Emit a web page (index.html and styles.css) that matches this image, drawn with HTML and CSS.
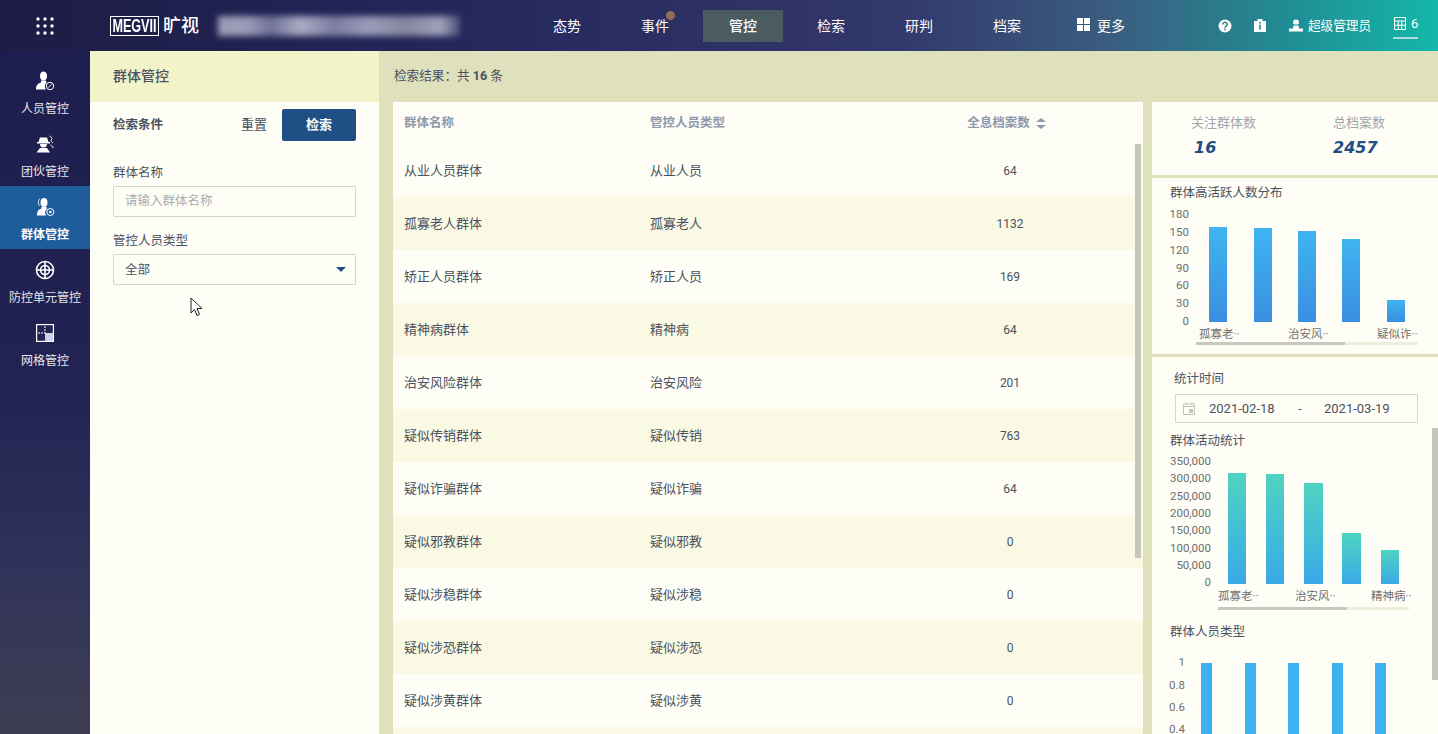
FILE: index.html
```html
<!DOCTYPE html>
<html lang="zh">

<head>
    <meta charset="UTF-8">
    <title>群体管控</title>
    <link rel="stylesheet" href="styles.css">
</head>

<body>
    <header class="topbar">
        <div class="apps">
            <svg width="18" height="18" viewBox="0 0 18 18" fill="#fff">
                <circle cx="2" cy="2" r="1.7" /><circle cx="9" cy="2" r="1.7" /><circle cx="16" cy="2" r="1.7" />
                <circle cx="2" cy="9" r="1.7" /><circle cx="9" cy="9" r="1.7" /><circle cx="16" cy="9" r="1.7" />
                <circle cx="2" cy="16" r="1.7" /><circle cx="9" cy="16" r="1.7" /><circle cx="16" cy="16" r="1.7" />
            </svg>
        </div>
        <div class="logo">
            <span class="logo-box"><span class="logo-en">MEGVII</span></span>
            <span class="logo-cn">旷视</span>
        </div>
        <div class="blurred"></div>
        <nav class="nav">
            <a class="nav-item">态势</a>
            <a class="nav-item">事件<i class="nav-dot"></i></a>
            <a class="nav-item active">管控</a>
            <a class="nav-item">检索</a>
            <a class="nav-item">研判</a>
            <a class="nav-item">档案</a>
            <a class="nav-item nav-more">
                <svg class="more-icon" width="13" height="13" viewBox="0 0 13 13" fill="#fff">
                    <rect width="6" height="6" /><rect x="7" width="6" height="6" />
                    <rect y="7" width="6" height="6" /><rect x="7" y="7" width="6" height="6" />
                </svg>更多
            </a>
        </nav>
        <div class="tools">
            <svg class="tool-help" width="14" height="14" viewBox="0 0 14 14">
                <circle cx="7" cy="7" r="6.5" fill="#fff" />
                <path d="M4.8 5.4a2.2 2.1 0 1 1 3.4 1.8c-.8.5-1.2.9-1.2 1.6" fill="none" stroke="#2a7f8c" stroke-width="1.5" />
                <rect x="6.2" y="9.7" width="1.6" height="1.6" fill="#2a7f8c" />
            </svg>
            <svg class="tool-info" width="12" height="13" viewBox="0 0 12 13">
                <path d="M0 2h3.5V0h5v2H12v11H0z" fill="#fff" />
                <rect x="5.2" y="3" width="1.6" height="1.6" fill="#25868c" />
                <rect x="5.2" y="5.6" width="1.6" height="5" fill="#25868c" />
            </svg>
            <svg class="tool-user" width="14" height="13" viewBox="0 0 14 13" fill="#fff">
                <ellipse cx="7" cy="3" rx="3" ry="2.6" />
                <path d="M4.5 6.5h5l.6 3H14v3H0v-3h3.9z" />
            </svg>
            <span class="tool-name">超级管理员</span>
            <span class="tool-count">
                <svg width="12" height="13" viewBox="0 0 12 13" fill="none" stroke="#fff">
                    <path d="M.5.5h11v12H.5zM.5 4h11M.5 8.200h11M4.200 4v8.500M7.800 4v8.500" />
                </svg>
                <b>6</b>
            </span>
        </div>
    </header>

    <div class="layout">
        <aside class="sidebar">
            <a class="side-item">
                <svg width="20" height="20" viewBox="0 0 20 20" fill="#fff">
                    <ellipse cx="8.5" cy="5" rx="3.6" ry="4.6" />
                    <path d="M6 9.5h5l.5 2.6a5 5 0 0 0-.6 6.4H1c0-4 1.5-6 5-7z" />
                    <circle cx="15" cy="15" r="3.7" fill="none" stroke="#fff" />
                    <path d="M13.2 16.6l3.4-3.4" stroke="#fff" fill="none" />
                </svg>
                <span>人员管控</span>
            </a>
            <a class="side-item">
                <svg width="20" height="20" viewBox="0 0 20 20" fill="#fff">
                    <path d="M2 8h13v1.400H2zM5 3.500h7L13.500 8h-10z" />
                    <path d="M5 10h7a3.500 3.500 0 0 1-7 0z" />
                    <path d="M5 14h7l3 4.500H1.500z" />
                    <path d="M14.500 2c2 1 3 2 2 3.500s0 2.500 1.500 3.500M15.500 11c1.500.5 2.500 1.500 2.500 3" fill="none" stroke="#fff" />
                </svg>
                <span>团伙管控</span>
            </a>
            <a class="side-item active">
                <svg width="20" height="20" viewBox="0 0 20 20" fill="#fff">
                    <ellipse cx="9" cy="5.500" rx="3.500" ry="4.500" />
                    <path d="M6.500 10h5l.4 2a5 5 0 0 0-.8 6.500H2c0-4 1.200-6 4.500-7z" />
                    <path d="M5 1.500A6 6 0 0 0 4.500 9" fill="none" stroke="#fff" stroke-width=".8" />
                    <circle cx="15.300" cy="15" r="3.500" fill="none" stroke="#fff" />
                    <circle cx="15.300" cy="15" r="1.300" />
                </svg>
                <span>群体管控</span>
            </a>
            <a class="side-item">
                <svg width="20" height="20" viewBox="0 0 20 20" fill="none" stroke="#fff" stroke-width="1.600">
                    <circle cx="10" cy="10" r="8.500" />
                    <circle cx="10" cy="10" r="4.500" />
                    <path d="M10 1.500v17M1.500 10h17" />
                </svg>
                <span>防控单元管控</span>
            </a>
            <a class="side-item">
                <svg width="18" height="18" viewBox="0 0 18 18">
                    <rect x=".6" y=".6" width="16.800" height="16.800" fill="none" stroke="#fff" stroke-width="1.200" />
                    <rect x="9" y="9" width="8" height="8" fill="#c9d3ea" />
                    <path d="M2 9h7M9 2v7" stroke="#fff" stroke-dasharray="2 1" />
                </svg>
                <span>网格管控</span>
            </a>
        </aside>

        <section class="filter">
            <h2 class="filter-title">群体管控</h2>
            <div class="filter-body">
                <div class="filter-head">
                    <strong>检索条件</strong>
                    <span class="reset">重置</span>
                    <button class="search-btn">检索</button>
                </div>
                <label class="field-label first">群体名称</label>
                <input class="field" placeholder="请输入群体名称">
                <label class="field-label second">管控人员类型</label>
                <div class="field select">全部<i class="caret"></i></div>
            </div>
        </section>

        <main class="main">
            <div class="result-bar">检索结果：共 <b>16</b> 条</div>
            <div class="main-row">
                <div class="table-wrap">
                    <table class="groups">
                        <colgroup>
                            <col class="col-name">
                            <col class="col-type">
                            <col class="col-count">
                        </colgroup>
                        <thead>
                            <tr>
                                <th>群体名称</th>
                                <th>管控人员类型</th>
                                <th class="num">全息档案数<i class="sort"></i></th>
                            </tr>
                        </thead>
                        <tbody>
                            <tr><td>从业人员群体</td><td>从业人员</td><td class="num">64</td></tr>
                            <tr><td>孤寡老人群体</td><td>孤寡老人</td><td class="num">1132</td></tr>
                            <tr><td>矫正人员群体</td><td>矫正人员</td><td class="num">169</td></tr>
                            <tr><td>精神病群体</td><td>精神病</td><td class="num">64</td></tr>
                            <tr><td>治安风险群体</td><td>治安风险</td><td class="num">201</td></tr>
                            <tr><td>疑似传销群体</td><td>疑似传销</td><td class="num">763</td></tr>
                            <tr><td>疑似诈骗群体</td><td>疑似诈骗</td><td class="num">64</td></tr>
                            <tr><td>疑似邪教群体</td><td>疑似邪教</td><td class="num">0</td></tr>
                            <tr><td>疑似涉稳群体</td><td>疑似涉稳</td><td class="num">0</td></tr>
                            <tr><td>疑似涉恐群体</td><td>疑似涉恐</td><td class="num">0</td></tr>
                            <tr><td>疑似涉黄群体</td><td>疑似涉黄</td><td class="num">0</td></tr>
                            <tr><td></td><td></td><td></td></tr>
                        </tbody>
                    </table>
                    <div class="table-scroll"></div>
                </div>

                <aside class="stats">
                    <div class="card totals">
                        <div class="total total-a">
                            <span>关注群体数</span>
                            <b>16</b>
                        </div>
                        <div class="total total-b">
                            <span>总档案数</span>
                            <b>2457</b>
                        </div>
                    </div>

                    <div class="card chart-card">
                        <h3 class="chart-title">群体高活跃人数分布</h3>
                        <svg class="chart" width="286" height="150" viewBox="1152 204 286 150">
                            <defs>
                                <linearGradient id="blue" x1="0" y1="0" x2="0" y2="1">
                                    <stop offset="0" stop-color="#3fb4f2" />
                                    <stop offset="1" stop-color="#3a8fe0" />
                                </linearGradient>
                                <linearGradient id="teal" x1="0" y1="0" x2="0" y2="1">
                                    <stop offset="0" stop-color="#4fd4c0" />
                                    <stop offset="1" stop-color="#3aa9e8" />
                                </linearGradient>
                            </defs>
                            <g class="axis" text-anchor="end">
                                <text x="1189" y="218">180</text>
                                <text x="1189" y="236">150</text>
                                <text x="1189" y="254">120</text>
                                <text x="1189" y="272">90</text>
                                <text x="1189" y="289">60</text>
                                <text x="1189" y="307">30</text>
                                <text x="1189" y="325">0</text>
                            </g>
                            <g fill="url(#blue)">
                                <rect x="1209" y="227" width="18" height="95" />
                                <rect x="1254" y="228" width="18" height="94" />
                                <rect x="1298" y="231" width="18" height="91" />
                                <rect x="1342" y="239" width="18" height="83" />
                                <rect x="1387" y="300" width="18" height="22" />
                            </g>
                            <g class="axis">
                                <text x="1199" y="338">孤寡老··</text>
                                <text x="1288" y="338">治安风··</text>
                                <text x="1377" y="338">疑似诈··</text>
                            </g>
                            <rect x="1196" y="342" width="222" height="3" fill="#eeeedd" />
                            <rect x="1196" y="342" width="149" height="3" fill="#c8c8c0" />
                        </svg>
                    </div>

                    <div class="card activity">
                        <div class="time-label">统计时间</div>
                        <div class="date-range">
                            <svg class="date-icon" width="12" height="13" viewBox="0 0 12 13" fill="none" stroke="#c5c5b0">
                                <path d="M.5 2h11v10.500H.5zM.5 4.500h11M3 .5V3M9 .5V3" />
                                <rect x="6.500" y="7.500" width="3" height="3" fill="#c5c5b0" />
                            </svg>
                            <span class="date date-from">2021-02-18</span>
                            <span class="date-sep">-</span>
                            <span class="date">2021-03-19</span>
                        </div>
                        <h3 class="chart-title sub">群体活动统计</h3>
                        <svg class="chart" width="286" height="165" viewBox="1152 451 286 165">
                            <g class="axis" text-anchor="end">
                                <text x="1211" y="464">350,000</text>
                                <text x="1211" y="481">300,000</text>
                                <text x="1211" y="499">250,000</text>
                                <text x="1211" y="516">200,000</text>
                                <text x="1211" y="533">150,000</text>
                                <text x="1211" y="551">100,000</text>
                                <text x="1211" y="568">50,000</text>
                                <text x="1211" y="585">0</text>
                            </g>
                            <g fill="url(#teal)">
                                <rect x="1228" y="472" width="18" height="111" />
                                <rect x="1266" y="473" width="18" height="110" />
                                <rect x="1304" y="482" width="19" height="101" />
                                <rect x="1342" y="532" width="19" height="51" />
                                <rect x="1381" y="549" width="18" height="34" />
                            </g>
                            <g class="axis">
                                <text x="1218" y="599">孤寡老··</text>
                                <text x="1295" y="599">治安风··</text>
                                <text x="1371" y="599">精神病··</text>
                            </g>
                            <rect x="1218" y="606" width="191" height="3" fill="#eeeedd" />
                            <rect x="1218" y="606" width="129" height="3" fill="#c8c8c0" />
                        </svg>
                        <h3 class="chart-title sub last">群体人员类型</h3>
                        <svg class="chart" width="286" height="110" viewBox="1152 642 286 110">
                            <g class="axis" text-anchor="end">
                                <text x="1185" y="664">1</text>
                                <text x="1185" y="687">0.8</text>
                                <text x="1185" y="709">0.6</text>
                                <text x="1185" y="731">0.4</text>
                            </g>
                            <g fill="#3fb0f0">
                                <rect x="1201" y="661" width="11" height="90" />
                                <rect x="1245" y="661" width="11" height="90" />
                                <rect x="1288" y="661" width="11" height="90" />
                                <rect x="1332" y="661" width="11" height="90" />
                                <rect x="1375" y="661" width="11" height="90" />
                            </g>
                        </svg>
                        <div class="stats-scroll"></div>
                    </div>
                </aside>
            </div>
        </main>
    </div>

    <svg class="cursor" width="14" height="20" viewBox="0 0 14 20">
        <path d="M1 1v15l3.500-3.500 2.500 6 2.500-1-2.500-6H12z" fill="#fff" stroke="#222" />
    </svg>
</body>

</html>
```

FILE: styles.css
```css
* {
    margin: 0;
    padding: 0;
    box-sizing: border-box;
}

html,
body {
    height: 100%;
    overflow: hidden;
}

body {
    font-family: Roboto, "Noto Sans CJK SC", sans-serif;
    font-size: 13px;
    color: #4a5160;
    background-color: #dfe0bc;
}

/* top bar */
.topbar {
    display: flex;
    align-items: center;
    height: 51px;
    background: linear-gradient(90deg, #1c1c44 0%, #24265a 30%, #32376c 62%, #3a5f80 78%, #1f8f95 90%, #14b8a8 100%);
    color: #fff;
}

.apps {
    display: flex;
    justify-content: center;
    width: 90px;
}

.logo {
    display: flex;
    align-items: center;
    margin-left: 20px;
    width: 108px;
}

.logo-box {
    display: block;
    width: 49px;
    height: 20px;
    border: 1px solid #fff;
    overflow: hidden;
}

.logo-en {
    display: block;
    font-family: "Liberation Sans", sans-serif;
    font-weight: bold;
    font-size: 18px;
    line-height: 18px;
    padding-left: 2px;
    transform: scaleX(0.7);
    transform-origin: left;
}

.logo-cn {
    margin-left: 4px;
    font-size: 18px;
    line-height: 20px;
    font-weight: 500;
}

.blurred {
    width: 242px;
    height: 20px;
    background:
        linear-gradient(90deg, #9b9cb8 0 12%, #70729a 22%, #a9aac2 34%, #7c7ea2 48%, #9a9bb8 62%, #85879f 78%, #a0a1ba 92%, #4b4d78 100%);
    filter: blur(3px);
}

.nav {
    display: flex;
    gap: 8px;
    margin-left: 67px;
}

.nav-item {
    position: relative;
    display: flex;
    align-items: center;
    justify-content: center;
    width: 80px;
    height: 32px;
    padding-bottom: 2px;
    font-size: 14px;
}

.nav-item.active {
    background-color: #4a5c60;
    font-weight: 500;
}

.nav-more {
    padding-left: 12px;
}

.nav-dot {
    position: absolute;
    top: 1px;
    left: 51px;
    width: 9px;
    height: 9px;
    border-radius: 50%;
    background-color: #8f6f55;
}

.more-icon {
    margin-right: 7px;
}

.tools {
    display: flex;
    align-items: center;
    margin-left: 83px;
}

.tool-info {
    margin-left: 22px;
}

.tool-user {
    margin-left: 23px;
}

.tool-name {
    margin-left: 5px;
    padding-bottom: 2px;
    font-size: 12.6px;
}

.tool-count {
    display: flex;
    align-items: center;
    gap: 5px;
    height: 27px;
    margin-left: 22px;
    padding: 0 0 2px 1px;
    border-bottom: 2px solid #a9dcd8;
    font-size: 13px;
}

.tool-count b {
    font-weight: 400;
}

/* page body */
.layout {
    display: flex;
    height: 683px;
}

.sidebar {
    width: 90px;
    padding-top: 9px;
    background: linear-gradient(180deg, #1e1e4e 0%, #222352 50%, #33345a 78%, #3d3d52 100%);
}

.side-item {
    display: flex;
    flex-direction: column;
    align-items: center;
    height: 63px;
    padding-top: 11px;
    color: #e4e6ee;
    font-size: 12px;
}

.side-item svg {
    height: 20px;
    flex: none;
}

.side-item span {
    margin-top: 9px;
    line-height: 18px;
}

.side-item.active {
    background-color: #1e5c9c;
    color: #fff;
    font-weight: 700;
}

.filter {
    width: 289px;
    background-color: #fefef6;
}

.filter-title {
    height: 51px;
    padding-left: 23px;
    font-size: 14px;
    font-weight: 500;
    line-height: 51px;
    background-color: #f3f3ca;
}

.filter-body {
    padding: 7px 23px 0;
}

.filter-head {
    display: flex;
    align-items: center;
    height: 32px;
}

.filter-head strong {
    flex: 1;
    padding-bottom: 3px;
    font-size: 12.5px;
}

.reset {
    margin-right: 15px;
    padding-bottom: 3px;
}

.search-btn {
    width: 74px;
    height: 32px;
    padding-bottom: 3px;
    border: none;
    border-radius: 2px;
    background-color: #1f4f85;
    color: #fff;
    font-family: inherit;
    font-size: 13px;
    font-weight: 700;
}

.field-label {
    display: block;
    font-size: 12.5px;
    line-height: 18px;
}

.field-label.first {
    margin-top: 23px;
}

.field-label.second {
    margin-top: 15px;
}

.field {
    display: block;
    width: 243px;
    height: 31px;
    margin-top: 4px;
    padding: 0 11px 2px;
    border: 1px solid #d6d6c4;
    border-radius: 1px;
    background: transparent;
    font-family: inherit;
    font-size: 12.5px;
    color: #4a5160;
    outline: none;
}

.field::placeholder {
    color: #a8adb5;
}

.select {
    position: relative;
    margin-top: 4px;
    line-height: 29px;
}

.caret {
    position: absolute;
    top: 12px;
    right: 9px;
    border-style: solid;
    border-width: 5px 5px 0;
    border-color: #1f4f85 transparent transparent;
}

.main {
    flex: 1;
    min-width: 0;
}

.result-bar {
    height: 51px;
    padding-left: 15px;
    font-size: 12.6px;
    line-height: 49px;
}

.main-row {
    display: flex;
    padding-left: 14px;
    gap: 9px;
}

.table-wrap {
    position: relative;
    width: 750px;
    height: 632px;
    overflow: hidden;
    background-color: #fefef6;
}

.groups {
    width: 750px;
    table-layout: fixed;
    border-collapse: collapse;
}

.col-name {
    width: 246px;
}

.col-type {
    width: 238px;
}

.col-count {
    width: 266px;
}

.groups th {
    height: 42px;
    padding: 0 11px 3px;
    font-size: 12.5px;
    font-weight: 700;
    text-align: left;
    color: #8e99ad;
}

.groups td {
    height: 53px;
    padding: 0 11px 2px;
}

.groups tbody tr:nth-child(even) {
    background-color: #fafae4;
}

.groups .num {
    text-align: center;
}

.groups td.num {
    padding-bottom: 0;
    font-size: 12px;
}

.groups th.num {
    padding-right: 18px;
}

.sort {
    display: inline-block;
    position: relative;
    width: 10px;
    height: 11px;
    margin-left: 6px;
    vertical-align: -2px;
}

.sort::before,
.sort::after {
    content: "";
    position: absolute;
    left: 0;
    border-left: 5px solid transparent;
    border-right: 5px solid transparent;
}

.sort::before {
    top: 0;
    border-bottom: 4.5px solid #8e99ad;
}

.sort::after {
    bottom: 0;
    border-top: 4.5px solid #8e99ad;
}

.table-scroll {
    position: absolute;
    top: 42px;
    right: 2px;
    width: 6px;
    height: 414px;
    background-color: #c4c6b8;
}

.stats {
    display: flex;
    flex-direction: column;
    gap: 3px;
    width: 286px;
    height: 632px;
}

.card {
    background-color: #fefef6;
}

.totals {
    display: flex;
    height: 73px;
}

.total span {
    display: block;
    color: #a0a5ad;
    line-height: 18px;
}

.total b {
    display: block;
    margin-top: 7px;
    font-family: "DejaVu Sans", sans-serif;
    font-size: 16px;
    font-style: italic;
    font-weight: 700;
    line-height: 18px;
    color: #1f4f85;
}

.total-a {
    width: 181px;
    padding: 12px 0 0 39px;
}

.total-a b {
    margin-left: 3px;
}

.total-b {
    padding-top: 12px;
}

.chart-card {
    height: 176px;
    padding-top: 5px;
}

.chart-title {
    height: 18px;
    padding: 2px 0 0 18px;
    font-size: 12.5px;
    font-weight: 400;
    line-height: 16px;
    color: #4a5160;
}

.chart {
    display: block;
    margin-top: 3px;
}

.axis {
    font-family: Roboto, "Noto Sans CJK SC", sans-serif;
    font-size: 11.5px;
    fill: #6e6e6e;
}

.activity {
    position: relative;
    flex: 1;
    min-height: 0;
    overflow: hidden;
    padding-top: 12px;
}

.time-label {
    height: 18px;
    padding: 2px 0 0 22px;
    font-size: 12.5px;
    line-height: 16px;
}

.date-range {
    display: flex;
    align-items: center;
    width: 243px;
    height: 29px;
    margin: 7px 0 0 23px;
    padding-left: 7px;
    border: 1px solid #d6d6c4;
    border-radius: 1px;
}

.date-icon {
    flex: none;
    margin-right: 14px;
}

.date {
    font-size: 13px;
}

.date-from {
    width: 89px;
}

.date-sep {
    width: 26px;
}

.sub {
    margin-top: 8px;
}

.sub.last {
    margin-top: 6px;
    padding-top: 0;
    line-height: 18px;
}

.stats-scroll {
    position: absolute;
    top: 71px;
    right: 0;
    width: 6px;
    height: 252px;
    background-color: #c4c6b8;
}

.cursor {
    position: absolute;
    top: 297px;
    left: 190px;
}
```
